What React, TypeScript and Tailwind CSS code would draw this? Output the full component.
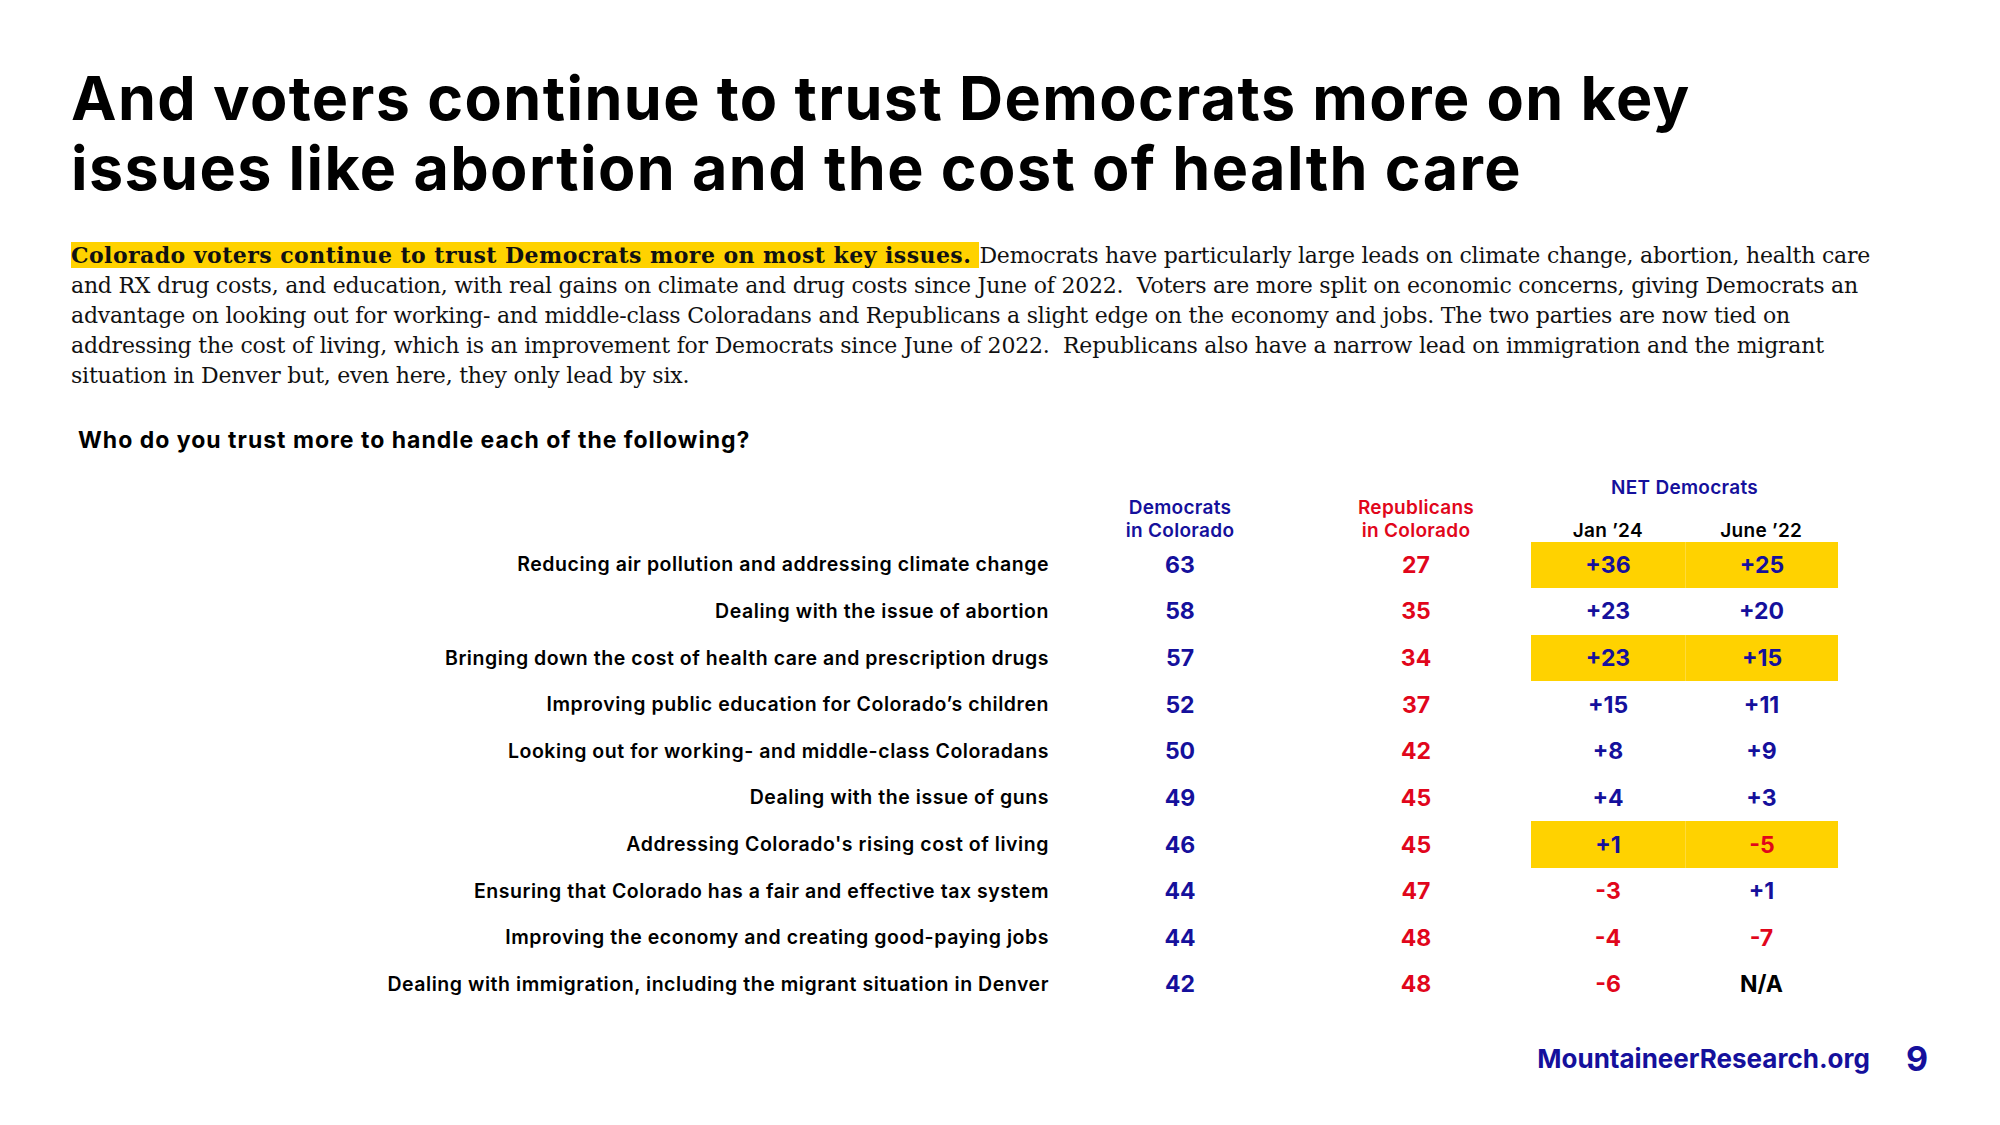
const BLUE = 'text-[#15109c]';
const RED = 'text-[#e1061b]';

const rows = [
  { label: 'Reducing air pollution and addressing climate change', dem: '63', rep: '27', jan: '+36', june: '+25', hl: true },
  { label: 'Dealing with the issue of abortion', dem: '58', rep: '35', jan: '+23', june: '+20' },
  { label: 'Bringing down the cost of health care and prescription drugs', dem: '57', rep: '34', jan: '+23', june: '+15', hl: true },
  { label: 'Improving public education for Colorado’s children', dem: '52', rep: '37', jan: '+15', june: '+11' },
  { label: 'Looking out for working- and middle-class Coloradans', dem: '50', rep: '42', jan: '+8', june: '+9' },
  { label: 'Dealing with the issue of guns', dem: '49', rep: '45', jan: '+4', june: '+3' },
  { label: "Addressing Colorado's rising cost of living", dem: '46', rep: '45', jan: '+1', june: '-5', hl: true },
  { label: 'Ensuring that Colorado has a fair and effective tax system', dem: '44', rep: '47', jan: '-3', june: '+1' },
  { label: 'Improving the economy and creating good-paying jobs', dem: '44', rep: '48', jan: '-4', june: '-7' },
  { label: 'Dealing with immigration, including the migrant situation in Denver', dem: '42', rep: '48', jan: '-6', june: 'N/A' },
];

const netColor = (v: string) => (v.startsWith('+') ? BLUE : v.startsWith('-') ? RED : 'text-black');

const paragraph = [
  'and RX drug costs, and education, with real gains on climate and drug costs since June of 2022.\u00a0 Voters are more split on economic concerns, giving Democrats an',
  'advantage on looking out for working- and middle-class Coloradans and Republicans a slight edge on the economy and jobs. The two parties are now tied on',
  'addressing the cost of living, which is an improvement for Democrats since June of 2022.\u00a0 Republicans also have a narrow lead on immigration and the migrant',
  'situation in Denver but, even here, they only lead by six.',
];

export default function App() {
  return (
    <div className="w-[2000px] h-[1125px] bg-white overflow-hidden flex flex-col font-['Inter',sans-serif] text-black">
      <h1 className="pl-[71px] pt-[63px] text-[61px] leading-[70px] font-bold tracking-[1.4px]">
        And voters continue to trust Democrats more on key
        <br />
        issues like abortion and the cost of health care
      </h1>

      <div className="pl-[71px] mt-[37px] font-['DejaVu_Serif',serif] text-[22px] leading-[30px] tracking-[-0.22px] text-[#111]">
        <div className="whitespace-nowrap">
          <span className="bg-[#ffd200] font-bold tracking-[0.45px]">Colorado voters continue to trust Democrats more on most key issues. </span>
          {' '}Democrats have particularly large leads on climate change, abortion, health care
        </div>
        {paragraph.map((line, i) => (
          <div key={i} className="whitespace-nowrap">{line}</div>
        ))}
      </div>

      <div className="pl-[78px] mt-[35px] text-[23px] leading-[28px] font-bold tracking-[1px]">
        Who do you trust more to handle each of the following?
      </div>

      <div className="mt-[21.5px] grid grid-cols-[1049px_262px_220px_154px_153px] items-end text-[19px] leading-[23px] font-semibold tracking-[0.3px]">
        <div />
        <div className={`text-center ${BLUE}`}>
          Democrats
          <br />
          in Colorado
        </div>
        <div className={`text-center pr-[10px] ${RED}`}>
          Republicans
          <br />
          in Colorado
        </div>
        <div className="col-span-2 flex flex-col">
          <div className={`text-center ${BLUE}`}>NET Democrats</div>
          <div className="mt-[20px] grid grid-cols-2 text-center text-black">
            <div>Jan ’24</div>
            <div>June ’22</div>
          </div>
        </div>
      </div>

      <div className="flex flex-col">
        {rows.map((r) => (
          <div key={r.label} className="grid grid-cols-[1049px_262px_220px_154px_153px] h-[46.67px] items-center">
            <div className="text-right text-[19.5px] font-semibold tracking-[0.55px]">{r.label}</div>
            <div className={`text-center text-[23px] font-bold ${BLUE}`}>{r.dem}</div>
            <div className={`text-center pr-[10px] text-[23px] font-bold ${RED}`}>{r.rep}</div>
            <div className={`h-full flex items-center justify-center text-[23px] font-bold ${r.hl ? 'bg-[#ffd200]' : ''} ${netColor(r.jan)}`}>
              {r.jan}
            </div>
            <div className={`h-full flex items-center justify-center text-[23px] font-bold ${r.hl ? 'bg-[#ffd200] border-l border-[#ffdb3a]' : ''} ${netColor(r.june)}`}>
              {r.june}
            </div>
          </div>
        ))}
      </div>

      <div className="mt-[25px] flex items-center justify-end pr-[72px]">
        <span className="text-[26px] font-bold text-[#15109c]">MountaineerResearch.org</span>
        <span className="ml-[36px] text-[34px] font-bold text-[#15109c]">9</span>
      </div>
    </div>
  );
}
